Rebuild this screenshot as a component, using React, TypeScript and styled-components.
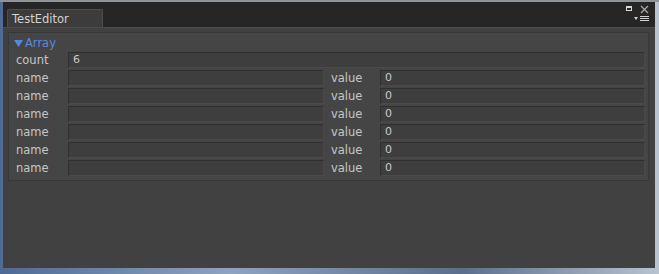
import React from "react";
import styled, { createGlobalStyle } from "styled-components";

const GlobalStyle = createGlobalStyle`
  html, body {
    margin: 0;
    padding: 0;
    background: #414141;
  }
`;

const ROWS = 6;

const Frame = styled.div`
  width: 659px;
  height: 274px;
  box-sizing: border-box;
  display: grid;
  grid-template-rows: 25px 241px;
  padding: 0 4px 6px 3px;
  background: linear-gradient(90deg, #4f6a93 0%, #8ea3bf 35%, #5b6e8a 70%, #b9c3d0 100%);
  border-top: 2px solid #8f9499;
  font-family: "DejaVu Sans", "Liberation Sans", sans-serif;
  font-size: 11px;
  color: #c4c4c4;
`;

const TabBar = styled.div`
  display: flex;
  align-items: flex-end;
  background: #262626;
  padding-left: 4px;
  position: relative;
`;

const Tab = styled.div`
  width: 96px;
  height: 18px;
  box-sizing: border-box;
  padding: 2px 0 0 4px;
  background: #3c3c3c;
  border: 1px solid #4d4d4d;
  border-bottom: none;
  border-radius: 2px 2px 0 0;
  color: #d2d2d2;
  font-size: 11.5px;
`;

const WindowIcons = styled.div`
  position: absolute;
  top: 3px;
  right: 5px;
  display: flex;
  flex-direction: column;
  align-items: flex-end;
  gap: 1px;
`;

const Panel = styled.div`
  box-sizing: border-box;
  background: #414141;
  border-top: 1px solid #4d4d4d;
  padding: 4px 6px 0 5px;
`;

const Group = styled.div`
  background: #454545;
  border: 1px solid #373737;
  padding: 2px 3px 3px 5px;
`;

const Foldout = styled.div`
  height: 16px;
  display: flex;
  align-items: center;
  gap: 2px;
  color: #5588e0;
  font-size: 11.5px;
`;

const Row = styled.div<{ $split?: boolean }>`
  height: 18px;
  display: grid;
  grid-template-columns: 54px ${(p) => (p.$split ? "256px 56px 1fr" : "1fr")};
  align-items: center;
`;

const Label = styled.span`
  padding-left: 2px;
  color: #c6c6c6;
  font-size: 11.5px;
`;

const ValueLabel = styled.span`
  height: 16px;
  line-height: 16px;
  padding-left: 7px;
  color: #c6c6c6;
  font-size: 11.5px;
`;

const Field = styled.div`
  height: 16px;
  box-sizing: border-box;
  background: #3e3e3e;
  border: 1px solid #2f2f2f;
  border-bottom-color: #4a4a4a;
  border-right-color: #4a4a4a;
  padding-left: 4px;
  line-height: 14px;
  color: #c8c8c8;
  font-size: 11px;
`;

export default function App() {
  return (
    <>
      <GlobalStyle />
      <Frame>
        <TabBar>
          <Tab>TestEditor</Tab>
          <WindowIcons>
            <svg width="26" height="9" viewBox="0 0 26 9">
              <rect x="2.5" y="1.5" width="5" height="4" fill="none" stroke="#d8d8d8" />
              <rect x="2.5" y="1.5" width="5" height="1.5" fill="#d8d8d8" />
              <path d="M17 1 L24 8 M24 1 L17 8" stroke="#a8a8a8" strokeWidth="1.3" />
            </svg>
            <svg width="16" height="7" viewBox="0 0 16 7">
              <path d="M0 2 L4 2 L2 5 Z" fill="#cfcfcf" />
              <path d="M6 1.5 H15 M6 3.5 H15 M6 5.5 H15" stroke="#cfcfcf" strokeWidth="1" />
            </svg>
          </WindowIcons>
        </TabBar>
        <Panel>
          <Group>
            <Foldout>
              <svg width="9" height="8" viewBox="0 0 9 8">
                <path d="M0 1 L9 1 L4.5 8 Z" fill="#5588e0" />
              </svg>
              Array
            </Foldout>
            <Row>
              <Label>count</Label>
              <Field>6</Field>
            </Row>
            {Array.from({ length: ROWS }).map((_, i) => (
              <Row key={i} $split>
                <Label>name</Label>
                <Field />
                <ValueLabel>value</ValueLabel>
                <Field>0</Field>
              </Row>
            ))}
          </Group>
        </Panel>
      </Frame>
    </>
  );
}
